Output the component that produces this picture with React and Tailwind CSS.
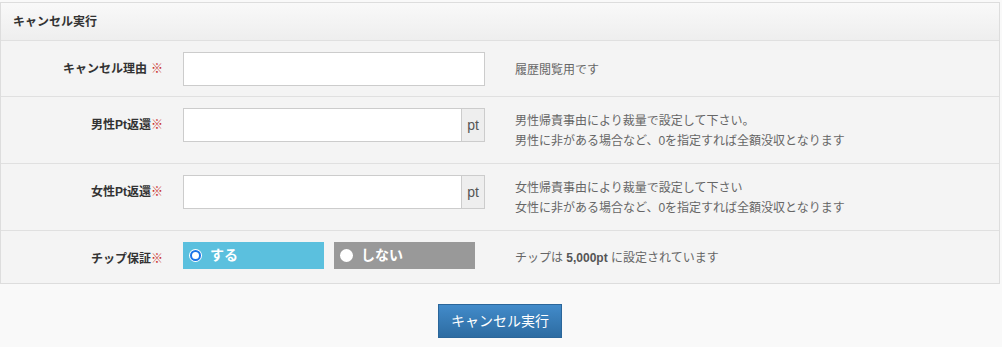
import { useState } from "react";

const font = "font-['Liberation_Sans','Noto_Sans_CJK_JP',sans-serif]";

function Row({ label, gap, height, children, help }) {
  return (
    <div className={`flex items-start border-t border-[#e0e0e0] pt-[11px] ${height}`}>
      <div className="w-[162px] h-[34px] flex items-center justify-end text-[12px] font-bold text-[#333]">
        {label}
        <span className={`text-[#c9302c] font-normal ${gap ? "ml-[4px]" : ""}`}>※</span>
      </div>
      <div className="ml-[20px] w-[302px] shrink-0">{children}</div>
      <div className="ml-[30px] self-center -mt-[9px] text-[12px] leading-[20px] text-[#666]">{help}</div>
    </div>
  );
}

function PtInput() {
  return (
    <div className="flex h-[34px]">
      <input className="flex-1 min-w-0 bg-white border border-[#ccc] outline-none px-2 text-[14px]" />
      <span className="w-[23px] flex items-center justify-center bg-[#eee] border border-l-0 border-[#ccc] text-[14px] text-[#555]">pt</span>
    </div>
  );
}

function Dot({ on }) {
  if (on) {
    return (
      <span className="w-[13px] h-[13px] rounded-full bg-white flex items-center justify-center">
        <span className="w-[11px] h-[11px] rounded-full bg-white border-[2px] border-[#1a73e8]" />
      </span>
    );
  }
  return <span className="w-[13px] h-[13px] rounded-full bg-white" />;
}

export default function App() {
  const [tip, setTip] = useState("yes");

  return (
    <div className={`${font} bg-[#f9f9f9] min-h-[347px] pt-[2px] pr-[2px]`}>
      <div className="border border-[#ddd] bg-[#f4f4f4]">
        <div className="h-[38px] flex items-center pl-[12px] bg-gradient-to-b from-[#f9f9f9] to-[#eeeeee] border-b border-[#cfcfcf] text-[12px] font-bold text-[#333]">
          キャンセル実行
        </div>

        <div className="-mt-px">
          <Row label="キャンセル理由" gap height="h-[56px]" help="履歴閲覧用です">
            <input className="w-full h-[34px] bg-white border border-[#ccc] outline-none px-2 text-[14px]" />
          </Row>

          <Row
            label="男性Pt返還"
            height="h-[67px]"
            help={
              <>
                <p>男性帰責事由により裁量で設定して下さい。</p>
                <p>男性に非がある場合など、0を指定すれば全額没収となります</p>
              </>
            }
          >
            <PtInput />
          </Row>

          <Row
            label="女性Pt返還"
            height="h-[67px]"
            help={
              <>
                <p>女性帰責事由により裁量で設定して下さい</p>
                <p>女性に非がある場合など、0を指定すれば全額没収となります</p>
              </>
            }
          >
            <PtInput />
          </Row>

          <Row
            label="チップ保証"
            height="h-[53px]"
            help={
              <p>
                チップは <span className="font-bold text-[#555]">5,000pt</span> に設定されています
              </p>
            }
          >
            <div className="flex gap-[10px] w-[292px]">
              <button
                type="button"
                onClick={() => setTip("yes")}
                className={`w-[141px] h-[27px] flex items-center pl-[6px] gap-[8px] text-white text-[14px] font-bold ${tip === "yes" ? "bg-[#5bc0de]" : "bg-[#999]"}`}
              >
                <Dot on={tip === "yes"} />
                する
              </button>
              <button
                type="button"
                onClick={() => setTip("no")}
                className={`w-[141px] h-[27px] flex items-center pl-[6px] gap-[8px] text-white text-[14px] font-bold ${tip === "no" ? "bg-[#5bc0de]" : "bg-[#999]"}`}
              >
                <Dot on={tip === "no"} />
                しない
              </button>
            </div>
          </Row>
        </div>
      </div>

      <div className="flex justify-center pt-[20px]">
        <button
          type="button"
          className="w-[124px] h-[34px] bg-gradient-to-b from-[#428bca] to-[#2d6ca2] border border-[#2b669a] text-white text-[14px]"
        >
          キャンセル実行
        </button>
      </div>
    </div>
  );
}
